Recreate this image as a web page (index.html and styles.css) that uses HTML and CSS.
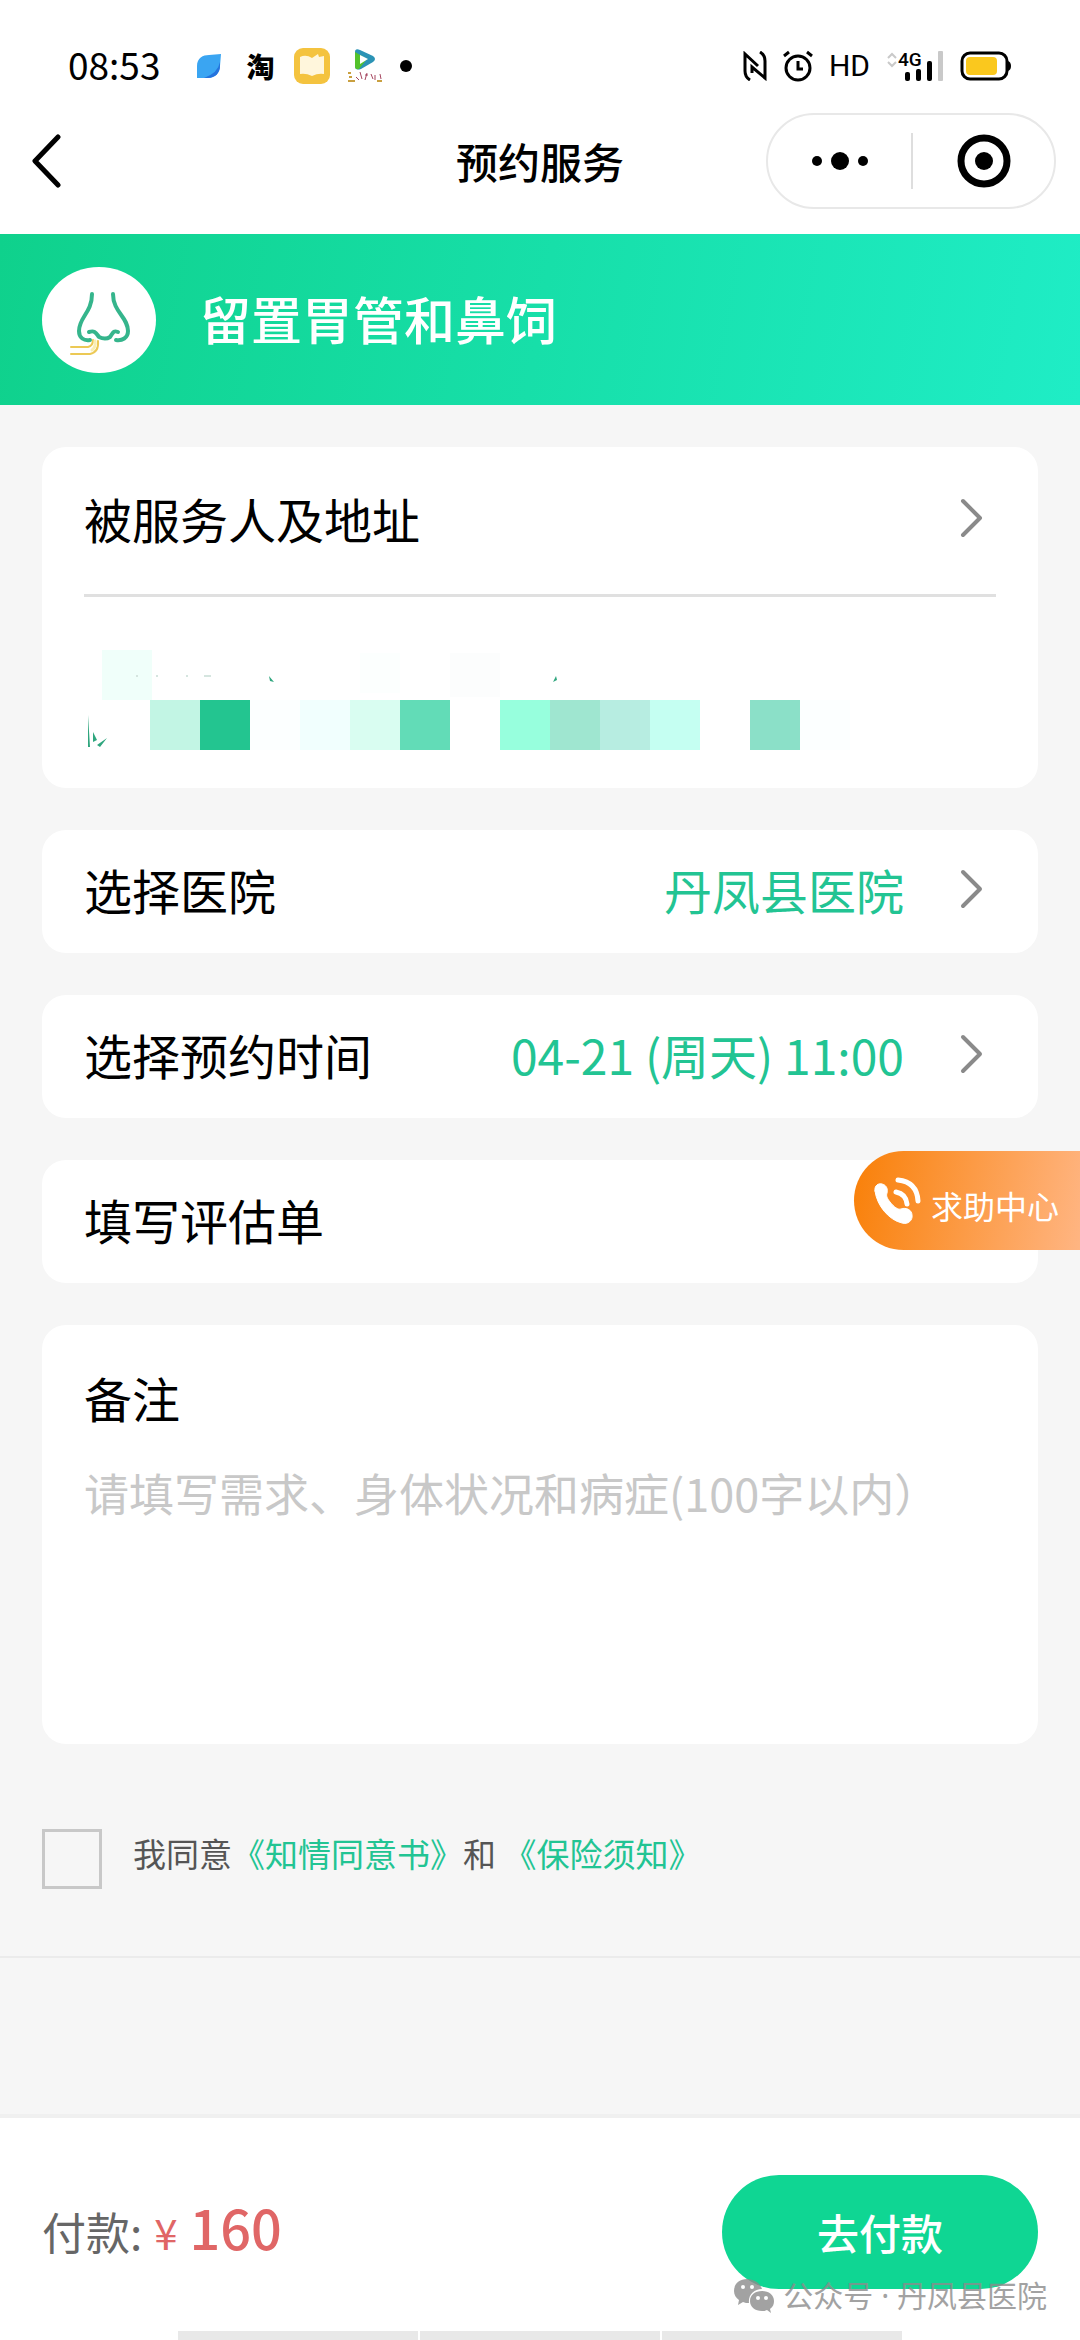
FILE: index.html
```html
<!DOCTYPE html>
<html lang="zh-CN">
<head>
  <meta charset="UTF-8">
  <meta name="viewport" content="width=device-width, initial-scale=1.0">
  <title>预约服务</title>
  <link rel="stylesheet" href="styles.css">
</head>
<body>
  <div class="status-bar">
    <div class="status-left">
      <span class="time">08:53</span>
      <svg class="app-leaf" width="26" height="26" viewBox="0 0 26 26">
        <path d="M1 25V13C1 5 7 2 13 2L25 1L24 13C24 20 19 25 12 25Z" fill="#3aa5f2"/>
        <path d="M8 25Q22 20 24 9V13C24 20 19 25 12 25Z" fill="#2573dd"/>
      </svg>
      <span class="app-tao">淘</span>
      <svg width="36" height="36" viewBox="0 0 36 36">
        <rect width="36" height="36" rx="9" fill="#f4c33f"/>
        <path d="M6 9Q12 6 18 10L24 6L25 9L30 8V26Q24 25 18 28Q12 25 6 26Z" fill="#fff6dc"/>
      </svg>
      <svg class="app-video" width="38" height="36" viewBox="0 0 38 36">
        <path d="M9 4Q9 0 14 2L27 8Q31 11 27 14L15 21Q9 23 9 18Z" fill="#2b93b5"/>
        <path d="M9 4L21 11L13 21Q9 22 9 18Z" fill="#53c22b"/>
        <path d="M14 7L22 11L14 16Z" fill="#fff"/>
        <path d="M10 29L13 32M14 24L16 31M19 27H22M21 25L19 32M25 26L27 31M29 27V32M34 26L35 31" stroke="#a5455f" stroke-width="1" fill="none"/>
        <path d="M2 25H5M3 29H6M2 33H9M31 33H36" stroke="#c9a040" stroke-width="2"/>
      </svg>
      <span class="dot"></span>
    </div>
    <div class="status-right">
      <svg width="24" height="30" viewBox="0 0 24 30" fill="none" stroke="#000" stroke-width="3">
        <path d="M7 29Q2 26 2 20V3L15 15M17 1Q22 4 22 10V27L9 16V22"/>
      </svg>
      <svg width="30" height="32" viewBox="0 0 30 32" fill="none" stroke="#000" stroke-width="3">
        <circle cx="15" cy="18" r="12"/>
        <path d="M15 11V19H20M1 6L6 2M29 6L24 2"/>
      </svg>
      <span class="hd">HD</span>
      <svg class="signal" width="58" height="40" viewBox="0 0 58 40">
        <path d="M2 12L6 8L10 12M2 16L6 20L10 16" fill="none" stroke="#c9c9c9" stroke-width="2"/>
        <text x="12" y="20" class="signal-text">4G</text>
        <rect x="19" y="26" width="5" height="9" rx="2"/>
        <rect x="30" y="23" width="5" height="12" rx="2"/>
        <rect x="41" y="15" width="5" height="20" rx="2"/>
        <rect x="52" y="5" width="5" height="30" rx="1" fill="#c9c9c9"/>
      </svg>
      <svg width="52" height="30" viewBox="0 0 52 30">
        <rect x="2" y="2" width="45" height="26" rx="8" fill="#fff" stroke="#000" stroke-width="3"/>
        <rect x="6" y="6" width="31" height="18" rx="4" fill="#fac81e"/>
        <path d="M48 10Q51 11 51 15Q51 19 48 20Z"/>
      </svg>
    </div>
  </div>

  <header class="nav-bar">
    <button type="button" class="back" aria-label="返回">
      <svg width="30" height="54" viewBox="0 0 30 54" fill="none" stroke="#000" stroke-width="5" stroke-linecap="round" stroke-linejoin="round">
        <path d="M26 3L3 27L26 51"/>
      </svg>
    </button>
    <h1>预约服务</h1>
    <div class="capsule">
      <button type="button" aria-label="更多">
        <svg width="58" height="20" viewBox="0 0 58 20">
          <circle cx="6" cy="10" r="5"/>
          <circle cx="29" cy="10" r="9"/>
          <circle cx="52" cy="10" r="5"/>
        </svg>
      </button>
      <button type="button" aria-label="关闭">
        <svg width="54" height="54" viewBox="0 0 54 54">
          <circle cx="27" cy="27" r="23" fill="none" stroke="#000" stroke-width="7"/>
          <circle cx="27" cy="27" r="9"/>
        </svg>
      </button>
    </div>
  </header>

  <section class="banner">
    <svg width="114" height="106" viewBox="0 0 114 106" fill="none" stroke-linecap="round" stroke-linejoin="round">
      <ellipse cx="57" cy="53" rx="57" ry="53" fill="#fff"/>
      <path d="M50 27C50 46 37 50 37 64C37 71 42 74 48 73M71 27C71 45 86 50 86 64C86 71 80 74 74 73M47 65C53 63 54 66 57 70C61 72 65 72 68 70C71 66 71 63 76 65" stroke="#35b58c" stroke-width="4"/>
      <path d="M29 80H46Q51 79 51 73M29 87H48Q57 85 56 74" stroke="#ecc955" stroke-width="2"/>
      <path d="M50 83Q54 80 53 74" stroke="#f9eeb4" stroke-width="3"/>
    </svg>
    <h2>留置胃管和鼻饲</h2>
  </section>

  <main class="content">
    <section class="card">
      <button type="button" class="row row-person">
        <span>被服务人及地址</span>
        <svg class="arrow" width="24" height="40" viewBox="0 0 24 40"><path d="M3 3L20 20L3 37"/></svg>
      </button>
      <!-- masked personal info -->
      <div class="masked">
        <svg viewBox="0 0 912 160">
          <rect x="18" y="53" width="50" height="50" fill="#f0fffa"/>
          <rect x="276" y="56" width="40" height="40" fill="#fcfffe"/>
          <rect x="366" y="56" width="50" height="44" fill="#fcfdfd"/>
          <path d="M185 79L190 85L186 84ZM472 79L469 85L473 83Z" fill="#2fa67e"/>
          <path d="M52 79H54M72 79H74M102 79H104M120 79H127" stroke="#d5e5df" stroke-width="2"/>
          <path d="M4 118L6 150H4ZM9 135L13 143L9 145ZM13 148L23 141L16 150Z" fill="#2fa67e"/>
          <rect x="66" y="103" width="50" height="50" fill="#c2f5e4"/>
          <rect x="116" y="103" width="50" height="50" fill="#23c590"/>
          <rect x="166" y="103" width="50" height="50" fill="#fcffff"/>
          <rect x="216" y="103" width="50" height="50" fill="#f1fffe"/>
          <rect x="266" y="103" width="50" height="50" fill="#d9fdf1"/>
          <rect x="316" y="103" width="50" height="50" fill="#62dcb7"/>
          <rect x="416" y="103" width="50" height="50" fill="#97ffdd"/>
          <rect x="466" y="103" width="50" height="50" fill="#9fe6d0"/>
          <rect x="516" y="103" width="50" height="50" fill="#b7ede1"/>
          <rect x="566" y="103" width="50" height="50" fill="#c5fff2"/>
          <rect x="666" y="103" width="50" height="50" fill="#8be0c8"/>
          <rect x="716" y="103" width="50" height="50" fill="#fcffff"/>
        </svg>
      </div>
    </section>

    <section class="card">
      <button type="button" class="row">
        <span>选择医院</span>
        <span class="value">丹凤县医院</span>
        <svg class="arrow" width="24" height="40" viewBox="0 0 24 40"><path d="M3 3L20 20L3 37"/></svg>
      </button>
    </section>

    <section class="card">
      <button type="button" class="row">
        <span>选择预约时间</span>
        <span class="value">04-21 (周天) 11:00</span>
        <svg class="arrow" width="24" height="40" viewBox="0 0 24 40"><path d="M3 3L20 20L3 37"/></svg>
      </button>
    </section>

    <section class="card">
      <button type="button" class="row">
        <span>填写评估单</span>
      </button>
      <a href="#" class="help">
        <svg width="50" height="50" viewBox="0 0 50 50" fill="none" stroke="#fff" stroke-linecap="round">
          <path d="M2 15C1 9 6 7 9 8C14 9 15 14 14 17C13 20 14 22 17 26C21 31 25 34 28 33C33 31 39 34 39 39C40 44 35 49 29 47C16 44 4 30 2 15Z" fill="#fff"/>
          <path d="M23 16Q33 18 34 28" stroke-width="5"/>
          <path d="M25 4Q44 6 45 25" stroke-width="5"/>
        </svg>
        <span>求助中心</span>
      </a>
    </section>

    <section class="card remark">
      <label for="remark">备注</label>
      <textarea id="remark" maxlength="100" placeholder="请填写需求、身体状况和病症(100字以内）"></textarea>
    </section>

    <div class="agree">
      <input type="checkbox" id="agree">
      <p><label for="agree">我同意</label><a href="#">《知情同意书》</a>和 <a href="#">《保险须知》</a></p>
    </div>
  </main>

  <footer class="pay-bar">
    <div class="pay">
      <p class="price">付款:<span class="yen">¥</span><strong>160</strong></p>
      <button type="button" class="pay-btn">去付款</button>
    </div>
    <div class="bottom-tabs"><span></span><span></span><span></span></div>
    <div class="watermark">
      <svg width="42" height="36" viewBox="0 0 42 36">
        <path d="M14 1C6 1 1 6 1 13C1 17 3 20 6 22L5 27L10 24C12 25 14 25 16 25C15 17 21 11 29 11C27 5 21 1 14 1Z"/>
        <path d="M29 13C22 13 17 17 17 23C17 29 22 33 29 33C31 33 32 33 34 32L38 35L37 31C40 29 41 26 41 23C41 17 36 13 29 13Z"/>
        <g fill="#fff">
          <circle cx="10" cy="9" r="2"/><circle cx="19" cy="9" r="2"/>
          <circle cx="25" cy="20" r="2"/><circle cx="33" cy="20" r="2"/>
        </g>
      </svg>
      <span>公众号 · 丹凤县医院</span>
    </div>
  </footer>
</body>
</html>
```
FILE: styles.css
```css
* {
  box-sizing: border-box;
}

body {
  margin: 0;
  min-height: 100vh;
  display: flex;
  flex-direction: column;
  background-color: #f6f6f6;
  color: #000;
  font-family: "Noto Sans CJK SC", sans-serif;
  font-size: 48px;
  line-height: 60px;
}

h1, h2, p {
  margin: 0;
}

svg {
  display: block;
  flex: none;
}

button {
  border: none;
  padding: 0;
  background: none;
  font: inherit;
  color: inherit;
  cursor: pointer;
}

a {
  color: #22c493;
  text-decoration: none;
}

/* status bar */
.status-bar {
  display: flex;
  justify-content: space-between;
  align-items: center;
  height: 108px;
  padding: 24px 68px 0;
  background-color: #fff;
}

.status-left,
.status-right {
  display: flex;
  align-items: center;
  gap: 16px;
}

.time {
  font-size: 37px;
  line-height: 48px;
  padding-bottom: 4px;
  margin-right: 20px;
}

.app-leaf {
  margin-right: 8px;
}

.app-tao {
  font-size: 28px;
  font-weight: 900;
  margin-right: 4px;
}

.dot {
  width: 12px;
  height: 12px;
  border-radius: 50%;
  background-color: #000;
}

.hd {
  font-family: Roboto, sans-serif;
  font-size: 30px;
}

.signal-text {
  font-family: Roboto, sans-serif;
  font-size: 19px;
  font-weight: 500;
}

/* nav bar */
.nav-bar {
  display: grid;
  grid-template-columns: 1fr auto 1fr;
  align-items: center;
  height: 126px;
  padding: 0 24px 20px;
  background-color: #fff;
}

.back {
  justify-self: start;
  padding: 0 8px;
}

.nav-bar h1 {
  font-size: 42px;
  font-weight: 500;
}

.capsule {
  justify-self: end;
  display: grid;
  grid-template-columns: 1fr 1fr;
  width: 290px;
  height: 96px;
  padding: 18px 0;
  border: 2px solid #e8e8e8;
  border-radius: 48px;
}

.capsule button {
  display: flex;
  justify-content: center;
  align-items: center;
}

.capsule button + button {
  border-left: 2px solid #dedede;
}

/* banner */
.banner {
  display: flex;
  align-items: center;
  gap: 44px;
  height: 171px;
  padding: 0 42px;
  background-image: linear-gradient(100deg, #0fd18c, #1fedc6);
}

.banner h2 {
  padding-bottom: 4px;
  color: #fff;
  font-size: 51px;
  font-weight: 500;
}

/* cards */
.content {
  flex: 1;
  display: flex;
  flex-direction: column;
  gap: 42px;
  padding: 42px 42px 0;
}

.card {
  position: relative;
  background-color: #fff;
  border-radius: 24px;
}

.row {
  display: flex;
  align-items: center;
  width: 100%;
  height: 123px;
  padding: 0 54px 6px 42px;
  text-align: left;
}

.row-person {
  height: 147px;
}

.value {
  margin-left: auto;
  color: #22c493;
}

.arrow {
  margin-left: auto;
  fill: none;
  stroke: #8a8a8a;
  stroke-width: 4;
  stroke-linecap: round;
  stroke-linejoin: round;
}

.value + .arrow {
  margin-left: 56px;
}

.masked {
  height: 194px;
  margin: 0 42px;
  border-top: 3px solid #e0e0e0;
}

.help {
  position: absolute;
  top: -9px;
  right: -42px;
  display: flex;
  align-items: center;
  gap: 8px;
  height: 99px;
  padding: 0 21px 0 19px;
  border-radius: 50px 0 0 50px;
  background-image: linear-gradient(100deg, #f98008, #ffb582);
  color: #fff;
  font-size: 32px;
}

.help span {
  padding-top: 8px;
}

.remark {
  display: flex;
  flex-direction: column;
  gap: 36px;
  height: 419px;
  padding: 42px;
}

.remark textarea {
  flex: 1;
  border: none;
  padding: 0;
  resize: none;
  outline: none;
  background: none;
  font: inherit;
  font-size: 45px;
}

.remark textarea::placeholder {
  color: #c8c8c8;
}

/* agreement */
.agree {
  display: flex;
  gap: 31px;
  height: 172px;
  margin: 0 -42px;
  padding: 43px 42px 0;
  border-bottom: 2px solid #ebebeb;
  color: #555;
  font-size: 33px;
  line-height: 48px;
}

.agree input {
  appearance: none;
  width: 60px;
  height: 60px;
  margin: 0;
  border: 3px solid #c8c8c8;
}

.agree input:checked {
  background-color: #22c493;
}

/* pay bar */
.pay-bar {
  position: relative;
  border-top: 4px solid #f0f0f0;
  background-color: #fff;
}

.pay {
  display: flex;
  justify-content: space-between;
  align-items: center;
  padding: 57px 42px 42px;
}

.price {
  display: flex;
  align-items: baseline;
  padding-bottom: 6px;
  color: #666;
  font-size: 44px;
}

.price .yen {
  margin: 0 12px;
  color: #e06666;
  font-size: 42px;
}

.price strong {
  color: #e06666;
  font-size: 54px;
  font-weight: 500;
}

.pay-btn {
  width: 316px;
  height: 114px;
  border-radius: 57px;
  background-color: #0fd693;
  color: #fff;
  font-size: 42px;
  font-weight: 500;
}

.bottom-tabs {
  display: grid;
  grid-template-columns: 1fr 1fr 1fr;
  gap: 2px;
  width: 67%;
  height: 9px;
  margin: 0 auto;
}

.bottom-tabs span {
  background-color: #e8e8e8;
}

.watermark {
  position: absolute;
  right: 33px;
  bottom: 24px;
  display: flex;
  align-items: center;
  gap: 8px;
  color: #8c8c8c;
  fill: #8c8c8c;
  font-family: "Noto Sans", "Noto Sans CJK SC", sans-serif;
  font-size: 30px;
  line-height: 40px;
  opacity: 0.8;
}
```
